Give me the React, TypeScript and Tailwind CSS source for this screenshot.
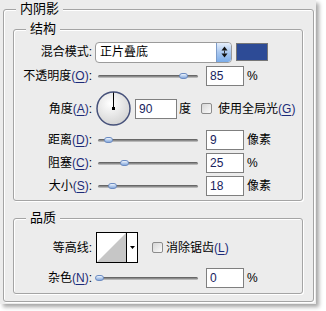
import React from 'react';

function Key({ k }: { k: string }) {
  return (
    <span className="text-[#1c2b78]">
      (<span className="underline underline-offset-[2px]">{k}</span>)
    </span>
  );
}

function Label({ text, k }: { text: string; k?: string }) {
  return (
    <div className="w-[78px] shrink-0 text-right text-[12px] leading-[14px] text-black">
      {text}
      {k && <Key k={k} />}:
    </div>
  );
}

function Slider({ at }: { at: number }) {
  return (
    <div className="relative ml-[6px] h-[8px] w-[100px] shrink-0">
      <div className="absolute inset-x-0 top-[3px] h-[3px] rounded-full bg-gradient-to-b from-[#555] via-[#8c8c8c] to-[#cfcfcf]" />
      <div
        className="absolute top-[1px] h-[6px] w-[9px] rounded-full border border-[#6c8cc2] bg-gradient-to-b from-[#eef4fc] to-[#86a9dc]"
        style={{ left: at - 4.5 }}
      />
    </div>
  );
}

function NumBox({ value, className }: { value: string; className: string }) {
  return (
    <div
      className={`h-[20px] shrink-0 border border-[#7f7f7f] bg-white pl-[3px] text-[12px] leading-[18px] text-[#18235e] ${className}`}
    >
      {value}
    </div>
  );
}

function Check({ className }: { className: string }) {
  return (
    <div
      className={`h-[11px] w-[11px] shrink-0 rounded-[2px] border border-[#8c8c8c] bg-gradient-to-br from-[#d6d6d6] to-[#fbfbfb] ${className}`}
    />
  );
}

function Group({
  title,
  className,
  children,
}: {
  title: string;
  className: string;
  children: React.ReactNode;
}) {
  return (
    <fieldset
      className={`rounded-[3px] border border-[#a4a4a4] shadow-[inset_1px_1px_0_#fff,1px_1px_0_#fff] ${className}`}
    >
      <legend className="ml-[12px] bg-[#ececec] px-[4px] text-[13px] leading-[16px] text-black">
        {title}
      </legend>
      {children}
    </fieldset>
  );
}

function SliderRow({
  label,
  k,
  at,
  value,
  unit,
  className = '',
}: {
  label: string;
  k: string;
  at: number;
  value: string;
  unit: string;
  className?: string;
}) {
  return (
    <div className={`flex h-[22px] items-center ${className}`}>
      <Label text={label} k={k} />
      <Slider at={at} />
      <NumBox value={value} className="ml-[8px] w-[38px]" />
      <span className="ml-[3px] text-[12px] leading-[14px] text-black">{unit}</span>
    </div>
  );
}

export default function App() {
  return (
    <div className="h-[311px] w-[326px] overflow-hidden bg-white font-['Liberation_Sans','Noto_Sans_CJK_SC',sans-serif]">
      <div className="h-[304px] w-[316px] bg-[#ececec] pl-[3px] pt-[1px] shadow-[3px_3px_4px_rgba(0,0,0,0.35)]">
        <Group title="内阴影" className="h-[301px] w-[311px]">
          <div className="pl-[9px] pr-[10px] pt-[4px]">
            <Group title="结构" className="h-[180px]">
              <div className="flex flex-col pt-[4px]">
                <div className="flex h-[22px] items-center">
                  <Label text="混合模式" />
                  <div className="ml-[3px] flex h-[21px] w-[137px] overflow-hidden rounded-[4px] border border-[#9b9b9b] bg-white">
                    <div className="flex-1 pl-[4px] text-[12px] leading-[19px] text-black">正片叠底</div>
                    <div className="flex w-[15px] items-center justify-center rounded-r-[3px] border-l border-[#7d9cc9] bg-gradient-to-b from-[#e6effb] via-[#a9c7ef] to-[#7badea]">
                      <svg width="7" height="12" viewBox="0 0 7 12">
                        <polygon points="3.5,0.5 6.5,4.5 0.5,4.5" fill="#111" />
                        <rect x="3" y="4.5" width="1" height="3" fill="#333" />
                        <polygon points="0.5,7.5 6.5,7.5 3.5,11.5" fill="#111" />
                      </svg>
                    </div>
                  </div>
                  <div className="ml-[4px] h-[18px] w-[32px] border border-[#777] bg-[#2d4b96]" />
                </div>

                <SliderRow label="不透明度" k="O" at={85} value="85" unit="%" className="mt-[2px]" />

                <div className="mt-[1px] flex h-[41px] items-center">
                  <Label text="角度" k="A" />
                  <svg width="35" height="35" className="ml-[4px] shrink-0">
                    <defs>
                      <radialGradient id="dial" cx="40%" cy="35%" r="70%">
                        <stop offset="0" stopColor="#ffffff" />
                        <stop offset="1" stopColor="#d2d2d2" />
                      </radialGradient>
                    </defs>
                    <circle cx="17.5" cy="17.5" r="16.5" fill="url(#dial)" stroke="#46517a" strokeWidth="1.5" />
                    <line x1="17.5" y1="17.5" x2="17.5" y2="1.5" stroke="#000" strokeWidth="1" />
                    <rect x="16" y="16" width="3" height="3" fill="#000" />
                  </svg>
                  <NumBox value="90" className="ml-[4px] w-[42px]" />
                  <span className="ml-[2px] text-[12px] leading-[14px] text-black">度</span>
                  <Check className="ml-[10px]" />
                  <span className="ml-[6px] text-[12px] leading-[14px] text-black">
                    使用全局光
                    <Key k="G" />
                  </span>
                </div>

                <SliderRow label="距离" k="D" at={10} value="9" unit="像素" />
                <SliderRow label="阻塞" k="C" at={26} value="25" unit="%" className="mt-[1px]" />
                <SliderRow label="大小" k="S" at={14} value="18" unit="像素" className="mt-[1px]" />
              </div>
            </Group>

            <Group title="品质" className="mt-[9px] h-[84px]">
              <div className="flex flex-col pt-[6px]">
                <div className="flex h-[31px] items-center">
                  <Label text="等高线" />
                  <div className="ml-[4px] flex h-[31px] w-[42px] shrink-0 border border-black bg-white">
                    <svg width="29" height="29" className="block">
                      <polygon points="0,29 29,0 29,29" fill="#c6c6c6" />
                    </svg>
                    <div className="flex w-[11px] items-center justify-center border-l border-black">
                      <svg width="5" height="3" viewBox="0 0 5 3">
                        <polygon points="0,0 5,0 2.5,3" fill="#000" />
                      </svg>
                    </div>
                  </div>
                  <Check className="ml-[14px]" />
                  <span className="ml-[3px] text-[12px] leading-[14px] text-black">
                    消除锯齿
                    <Key k="L" />
                  </span>
                </div>
                <div className="mt-[5px] flex h-[20px] items-center">
                  <Label text="杂色" k="N" />
                  <Slider at={1} />
                  <NumBox value="0" className="ml-[8px] w-[38px]" />
                  <span className="ml-[3px] text-[12px] leading-[14px] text-black">%</span>
                </div>
              </div>
            </Group>
          </div>
        </Group>
      </div>
    </div>
  );
}
